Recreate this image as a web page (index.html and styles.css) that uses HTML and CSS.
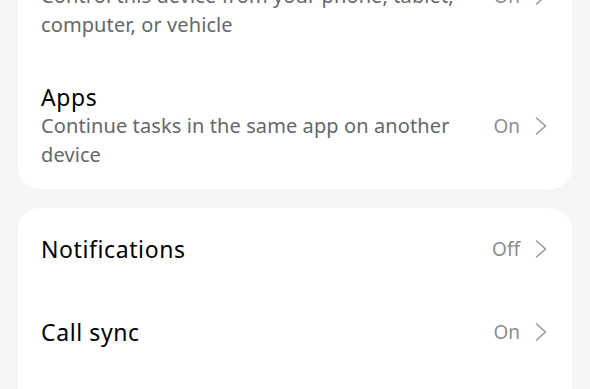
FILE: index.html
```html
<!DOCTYPE html>
<html lang="en">
<head>
<meta charset="utf-8">
<title>Continuity settings</title>
<link rel="stylesheet" href="styles.css">
</head>
<body>
<main class="page">
  <section class="card card-first">
    <div class="row">
      <div class="row-text">
        <div class="title">Devices</div>
        <div class="sub">Control this device from your phone, tablet, computer, or vehicle</div>
      </div>
      <div class="value">On<svg class="chev" viewBox="0 0 12 18" width="12" height="18"><path d="M1.5 1 L10.5 9 L1.5 17" /></svg></div>
    </div>
    <div class="row">
      <div class="row-text">
        <div class="title">Apps</div>
        <div class="sub">Continue tasks in the same app on another device</div>
      </div>
      <div class="value">On<svg class="chev" viewBox="0 0 12 18" width="12" height="18"><path d="M1.5 1 L10.5 9 L1.5 17" /></svg></div>
    </div>
  </section>
  <section class="card">
    <div class="row row-single">
      <div class="row-text"><div class="title">Notifications</div></div>
      <div class="value">Off<svg class="chev" viewBox="0 0 12 18" width="12" height="18"><path d="M1.5 1 L10.5 9 L1.5 17" /></svg></div>
    </div>
    <div class="row row-single">
      <div class="row-text"><div class="title">Call sync</div></div>
      <div class="value">On<svg class="chev" viewBox="0 0 12 18" width="12" height="18"><path d="M1.5 1 L10.5 9 L1.5 17" /></svg></div>
    </div>
    <div class="row row-single">
      <div class="row-text"><div class="title">Messages</div></div>
      <div class="value">On<svg class="chev" viewBox="0 0 12 18" width="12" height="18"><path d="M1.5 1 L10.5 9 L1.5 17" /></svg></div>
    </div>
  </section>
</main>
</body>
</html>
```
FILE: styles.css
```css
html, body {
  margin: 0;
  padding: 0;
  background: #f6f6f6;
  overflow: hidden;
}
body {
  font-family: "Noto Sans", "Open Sans", sans-serif;
  color: #000;
}
.page {
  padding: 0 18px;
  display: flex;
  flex-direction: column;
  gap: 19px;
}
.card {
  background: #fff;
  border-radius: 22px;
}
.card-first {
  margin-top: -69px;
}
.row {
  display: flex;
  align-items: center;
  gap: 20px;
  padding: 22px 25px 20px 23px;
}
.card-first .row:first-child {
  padding-bottom: 22px;
}
.row-single {
  box-sizing: border-box;
  height: 83px;
  padding-top: 0;
  padding-bottom: 2px;
}
.row-text {
  flex: 1;
  min-width: 0;
}
.title {
  font-size: 23px;
  line-height: 28px;
  letter-spacing: 0.6px;
  color: #000;
}
.sub {
  font-size: 20px;
  line-height: 29px;
  letter-spacing: 0.1px;
  color: #676767;
}
.value {
  display: flex;
  align-items: center;
  gap: 15px;
  font-size: 19px;
  color: #8c8c8c;
  white-space: nowrap;
}
.chev {
  display: block;
}
.chev path {
  fill: none;
  stroke: #999;
  stroke-width: 1.6;
  stroke-linecap: round;
  stroke-linejoin: round;
}
```
